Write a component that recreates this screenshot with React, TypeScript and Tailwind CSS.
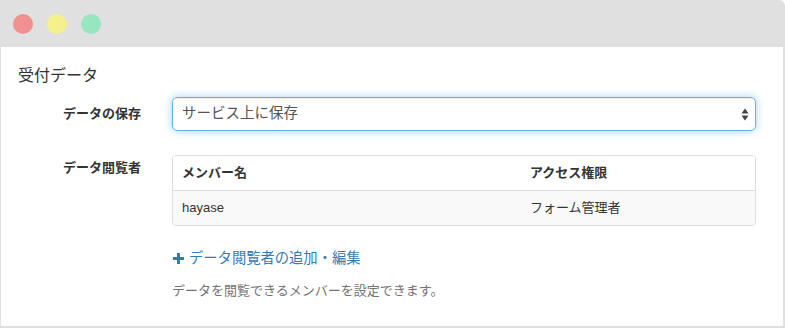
import React from "react";

const font = { fontFamily: '"Liberation Sans", "Noto Sans CJK JP", sans-serif' };

export default function App() {
  return (
    <div className="w-[785px] h-[328px] bg-white overflow-hidden" style={font}>
      <div className="w-[785px] h-[328px] flex flex-col border-l border-r-2 border-b-2 border-[#e0e0e0] rounded-tr-[6px] bg-white">
        <div className="h-[47px] shrink-0 bg-[#e0e0e0] flex items-center gap-[14px] pl-[12px] rounded-tr-[4px]">
          <div className="w-[20px] h-[20px] rounded-full bg-[#f09090]" />
          <div className="w-[20px] h-[20px] rounded-full bg-[#f5f08c]" />
          <div className="w-[20px] h-[20px] rounded-full bg-[#96e6bf]" />
        </div>
        <div className="flex flex-col pt-[18px] pl-[17px] pr-[27px]">
          <div className="text-[16px] leading-[22px] text-[#333]">受付データ</div>
          <div className="flex mt-[10px]">
            <div className="w-[154px] shrink-0 pr-[31px] pt-[7px] text-right text-[13px] leading-[19px] font-bold text-[#333]">
              データの保存
            </div>
            <div className="flex-1 h-[34px] rounded-[5px] border border-[#66afe9] shadow-[inset_0_1px_1px_rgba(0,0,0,0.075),0_0_8px_rgba(102,175,233,0.6)] flex items-center justify-between pl-[9px] pr-[6px]">
              <span className="text-[14.5px] text-[#555]">サービス上に保存</span>
              <svg width="8" height="13" viewBox="0 0 8 13">
                <path d="M4 0.5 L7.5 5.5 L0.5 5.5 Z" fill="#444" />
                <path d="M4 12.5 L7.5 7.5 L0.5 7.5 Z" fill="#444" />
              </svg>
            </div>
          </div>
          <div className="flex mt-[24px]">
            <div className="w-[154px] shrink-0 pr-[31px] pt-[3px] text-right text-[13px] leading-[19px] font-bold text-[#333]">
              データ閲覧者
            </div>
            <div className="flex-1 flex flex-col">
              <div className="border border-[#ddd] rounded-[4px] overflow-hidden text-[13px] text-[#333]">
                <div className="grid grid-cols-[348px_1fr] h-[34px] items-center font-bold bg-white">
                  <div className="pl-[9px]">メンバー名</div>
                  <div className="pl-[9px]">アクセス権限</div>
                </div>
                <div className="grid grid-cols-[348px_1fr] h-[35px] items-center bg-[#f9f9f9] border-t border-[#ddd]">
                  <div className="pl-[9px]">hayase</div>
                  <div className="pl-[9px]">フォーム管理者</div>
                </div>
              </div>
              <div className="mt-[22px] flex items-center gap-[5px] text-[14.3px] leading-[20px] text-[#337ab7]">
                <svg width="11" height="11" viewBox="0 0 11 11" className="ml-[1px]">
                  <path d="M4 0 H7 V4 H11 V7 H7 V11 H4 V7 H0 V4 H4 Z" fill="#337ab7" />
                </svg>
                <span>データ閲覧者の追加・編集</span>
              </div>
              <div className="mt-[14px] text-[13px] leading-[18px] text-[#737373]">
                データを閲覧できるメンバーを設定できます。
              </div>
            </div>
          </div>
        </div>
      </div>
    </div>
  );
}
